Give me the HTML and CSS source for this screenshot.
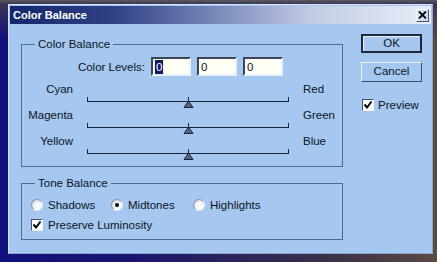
FILE: index.html
```html
<!DOCTYPE html>
<html lang="en">
<head>
    <meta charset="UTF-8">
    <title>Color Balance</title>
    <link rel="stylesheet" href="styles.css">
</head>
<body>

<div class="dialog">
    <div class="titlebar">
        <span class="title">Color Balance</span>
        <span class="close">
            <svg width="9" height="8" viewBox="0 0 9 8"><path d="M1 0.5 L8 7.5 M8 0.5 L1 7.5" stroke="#000" stroke-width="1.8"/></svg>
        </span>
    </div>

    <div class="content">
        <div class="left">
            <div class="group">
                <div class="group-title">Color Balance</div>
                <div class="levels">
                    <span class="levels-label">Color Levels:</span>
                    <span class="field"><span class="sel">0</span></span>
                    <span class="field">0</span>
                    <span class="field">0</span>
                </div>

                <div class="slider">
                    <span class="lab-l">Cyan</span>
                    <svg class="track" width="202" height="26" viewBox="0 0 202 26">
                        <path d="M0.5 15 V20 M201.5 15 V20 M0 19.5 H202" stroke="#18233c" stroke-width="1" fill="none"/>
                        <path d="M101.5 15 V19" stroke="#18233c"/>
                        <polygon points="101.5,19 106,25.5 97,25.5" fill="#5a6478" stroke="#18233c" stroke-width="1"/>
                    </svg>
                    <span class="lab-r">Red</span>
                </div>
                <div class="slider">
                    <span class="lab-l">Magenta</span>
                    <svg class="track" width="202" height="26" viewBox="0 0 202 26">
                        <path d="M0.5 15 V20 M201.5 15 V20 M0 19.5 H202" stroke="#18233c" stroke-width="1" fill="none"/>
                        <path d="M101.5 15 V19" stroke="#18233c"/>
                        <polygon points="101.5,19 106,25.5 97,25.5" fill="#5a6478" stroke="#18233c" stroke-width="1"/>
                    </svg>
                    <span class="lab-r">Green</span>
                </div>
                <div class="slider">
                    <span class="lab-l">Yellow</span>
                    <svg class="track" width="202" height="26" viewBox="0 0 202 26">
                        <path d="M0.5 15 V20 M201.5 15 V20 M0 19.5 H202" stroke="#18233c" stroke-width="1" fill="none"/>
                        <path d="M101.5 15 V19" stroke="#18233c"/>
                        <polygon points="101.5,19 106,25.5 97,25.5" fill="#5a6478" stroke="#18233c" stroke-width="1"/>
                    </svg>
                    <span class="lab-r">Blue</span>
                </div>
            </div>

            <div class="group tone">
                <div class="group-title">Tone Balance</div>
                <div class="radios">
                    <span class="opt"><span class="radio"></span>Shadows</span>
                    <span class="opt"><span class="radio on"></span>Midtones</span>
                    <span class="opt"><span class="radio"></span>Highlights</span>
                </div>
                <div class="opt check-row">
                    <span class="check">
                        <svg width="10" height="10" viewBox="0 0 10 10"><path d="M1.5 4.5 L4 7.5 L8.5 1.5" stroke="#000" stroke-width="2" fill="none"/></svg>
                    </span>Preserve Luminosity
                </div>
            </div>
        </div>

        <div class="right">
            <div class="btn btn-default">OK</div>
            <div class="btn">Cancel</div>
            <div class="opt preview">
                <span class="check">
                    <svg width="10" height="10" viewBox="0 0 10 10"><path d="M1.5 4.5 L4 7.5 L8.5 1.5" stroke="#000" stroke-width="2" fill="none"/></svg>
                </span>Preview
            </div>
        </div>
    </div>
</div>

</body>
</html>
```

FILE: styles.css
```css
*{margin: 0; padding: 0; box-sizing: border-box;}
html,body{
    height: 100%;
}
body{
    background: linear-gradient(to bottom, #5c5a5e 0, #3a3656 4px, transparent 40px),
                linear-gradient(to right, #12107c 0%, #1a1670 30%, #3a3048 75%, #5a4a44 100%);
    font-family: "Liberation Sans", Arial, sans-serif;
    font-size: 11.5px;
    color: #0c1424;
    overflow: hidden;
}
.dialog{
    width: 425px;
    height: 250px;
    margin: 4px 0 0 8px;
    padding: 1px;
    background: #a6c7ef;
    border: 1px solid #d4e4f8;
    border-right-color: #8aa6cc;
    border-bottom-color: #8aa6cc;
}
.titlebar{
    height: 18px;
    display: flex;
    align-items: center;
    justify-content: space-between;
    padding: 0 2px 0 3px;
    background: linear-gradient(to right, #15266a 0%, #2f4284 25%, #7c8cbc 50%, #c4cce4 72%, #e8eef8 100%);
}
.title{
    color: #fff;
    font-weight: bold;
    font-size: 11px;
}
.close{
    width: 13px;
    height: 13px;
    display: flex;
    align-items: center;
    justify-content: center;
    background: #d4e0f2;
    border: 1px solid #4a5470;
    border-top-color: #f4f8ff;
    border-left-color: #f4f8ff;
}
.content{
    display: flex;
    align-items: flex-start;
    padding-left: 11px;
}
.left{
    width: 322px;
    margin-top: 20px;
}
.group{
    border: 1px solid #4e6c98;
    padding-bottom: 6px;
}
.group-title{
    width: fit-content;
    height: 14px;
    line-height: 14px;
    margin: -8px 0 0 13px;
    padding: 0 3px;
    background: #a6c7ef;
}
.levels{
    display: flex;
    align-items: center;
    height: 19px;
    margin-top: 6px;
}
.levels-label{
    width: 123px;
    text-align: right;
    margin-right: 6px;
}
.field{
    width: 40px;
    height: 19px;
    margin-right: 6px;
    padding: 1px 0 0 2px;
    line-height: 14px;
    background: #fffff6;
    border: 2px solid #e8f0fc;
    border-top-color: #3c4658;
    border-left-color: #3c4658;
}
.sel{
    display: inline-block;
    padding: 0 1px;
    background: #10186a;
    color: #fff;
    outline: 1px dotted #e8e8a0;
}
.slider{
    display: grid;
    grid-template-columns: 51px 202px auto;
    column-gap: 14px;
    height: 26px;
}
.levels + .slider{
    margin-top: 6px;
}
.lab-l{
    text-align: right;
    line-height: 14px;
}
.lab-r{
    line-height: 14px;
}
.track{
    display: block;
}
.tone{
    margin-top: 16px;
    padding-bottom: 7px;
}
.radios{
    display: grid;
    grid-template-columns: 89px 82px auto;
    margin-top: 8px;
}
.opt{
    display: flex;
    align-items: center;
    height: 14px;
    line-height: 14px;
}
.radios .opt:first-child, .check-row{
    padding-left: 9px;
}
.radio{
    width: 12px;
    height: 12px;
    margin-right: 5px;
    border-radius: 50%;
    background: radial-gradient(circle at 60% 60%, #ffffff 0, #f2f4f8 45%, #b8c0cc 100%);
    border: 1px solid #8c96a8;
    border-right-color: #e6eef8;
    border-bottom-color: #e6eef8;
    display: flex;
    align-items: center;
    justify-content: center;
}
.radio.on::after{
    content: "";
    width: 4px;
    height: 4px;
    border-radius: 50%;
    background: #000;
}
.check-row{
    margin-top: 6px;
}
.check{
    width: 12px;
    height: 12px;
    margin-right: 5px;
    display: flex;
    align-items: center;
    justify-content: center;
    background: #fff;
    border: 1px solid #4a5468;
    border-right-color: #eef4fc;
    border-bottom-color: #eef4fc;
}
.right{
    margin: 10px 0 0 18px;
    width: 61px;
}
.btn{
    height: 20px;
    line-height: 16px;
    text-align: center;
    background: #a6c7ef;
    border: 1px solid #3c4c6c;
    border-top-color: #e8f0fc;
    border-left-color: #e8f0fc;
    margin-bottom: 8px;
}
.btn-default{
    height: 19px;
    line-height: 15px;
    border: 2px solid #1c2840;
    box-shadow: inset 1px 1px 0 #e8f0fc;
    margin-bottom: 9px;
}
.preview{
    margin-top: 16px;
    padding-left: 1px;
}
.preview .check{
    margin-right: 4px;
}
```
